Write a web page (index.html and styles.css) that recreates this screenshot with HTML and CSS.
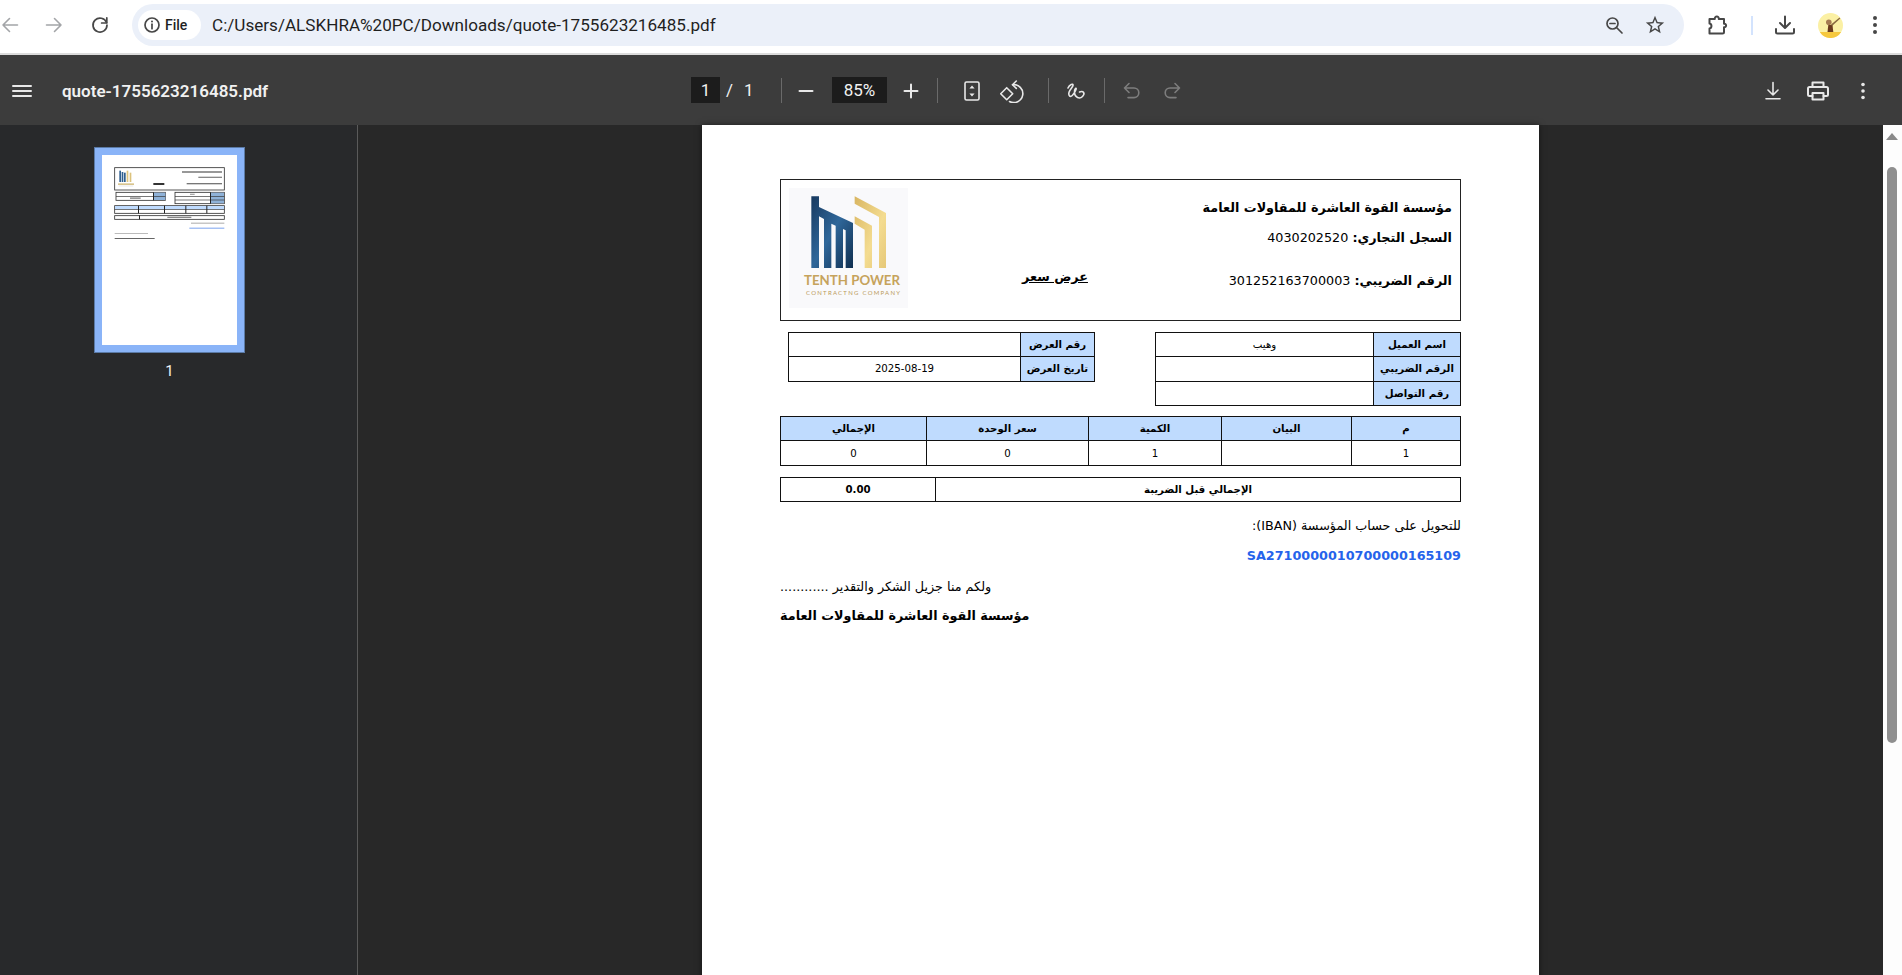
FILE: index.html
```html
<!DOCTYPE html>
<html lang="en">
<head>
  <meta charset="UTF-8" />
  <meta name="viewport" content="width=device-width, initial-scale=1.0"/>
  <title>quote-1755623216485.pdf</title>
  <link rel="stylesheet" href="styles.css">
</head>
<body>
  <!-- Chrome bar -->
  <header class="browser-bar">
    <span class="nav-btn nav-back">
      <svg width="20" height="20" viewBox="0 0 20 20"><path class="line-off" d="M17.500 10H3M9.500 3.500 3 10l6.500 6.500"/></svg>
    </span>
    <span class="nav-btn nav-forward">
      <svg width="20" height="20" viewBox="0 0 20 20"><path class="line-off" d="M2.500 10H17M10.500 3.500 17 10l-6.500 6.500"/></svg>
    </span>
    <span class="nav-btn nav-reload">
      <svg width="20" height="20" viewBox="0 0 20 20"><path class="line-on" d="M16.500 7.500A7 7 0 1 0 17 10"/><path class="line-on" d="M16.800 2.800v5.200h-5.200"/></svg>
    </span>
    <div class="address">
      <div class="site-chip">
        <svg width="18" height="18" viewBox="0 0 18 18"><circle class="line-on" cx="9" cy="9" r="7"/><path class="line-on" d="M9 8.200v4.500"/><circle class="dot-on" cx="9" cy="5.600" r="1"/></svg>
        <span>File</span>
      </div>
      <span class="url">C:/Users/ALSKHRA%20PC/Downloads/quote-1755623216485.pdf</span>
      <div class="address-icons">
        <svg width="20" height="20" viewBox="0 0 20 20"><circle class="line-on" cx="8.500" cy="8.500" r="5.500"/><path class="line-on" d="M6 8.500h5M12.500 12.500l5.500 5.500"/></svg>
        <svg width="22" height="22" viewBox="0 0 24 24"><path class="fill-on" d="M22 9.240l-7.190-.62L12 2 9.190 8.630 2 9.240l5.460 4.730L5.820 21 12 17.270 18.180 21l-1.630-7.030L22 9.240zM12 15.400l-3.760 2.270 1-4.280-3.320-2.880 4.380-.38L12 6.100l1.710 4.040 4.380.38-3.320 2.880 1 4.280L12 15.400z"/></svg>
      </div>
    </div>
    <div class="browser-actions">
      <span class="act act-ext">
        <svg width="22" height="22" viewBox="0 0 22 22"><path class="line-on thick" d="M2.500 5h5.300c-.4-3.300 4.400-3.300 4 0h5.200v4.800c2.800-.3 2.800 3.700 0 3.400v4.800a1.500 1.500 0 0 1-1.500 1.500H2.500v-5c2.600-.4 2.600-4.600 0-5z"/></svg>
      </span>
      <span class="act-sep"></span>
      <span class="act act-down">
        <svg width="22" height="22" viewBox="0 0 22 22"><path class="line-on thick" d="M11 2.500v11M6 9l5 5 5-5M2 15v3a1.500 1.500 0 0 0 1.500 1.500h15A1.500 1.500 0 0 0 20 18v-3"/></svg>
      </span>
      <span class="avatar">
        <svg width="25" height="25" viewBox="0 0 25 25">
          <circle cx="12.500" cy="12.500" r="12.500" fill="#fbf0a4"/>
          <path d="M1.800 19h21.400a12.500 12.500 0 0 1-21.400 0z" fill="#f6c83e"/>
          <path d="M9.500 19l.8-7h4.200l.8 7z" fill="#6b3a1e"/>
          <circle cx="10.800" cy="9.300" r="2.800" fill="#a67c52"/>
          <path d="M13 11.500L21.500 4.500l.8.900L14 13z" fill="#8a6a40"/>
        </svg>
      </span>
      <span class="act act-more">
        <svg width="6" height="20" viewBox="0 0 6 20"><circle class="dot-on" cx="3" cy="3" r="2"/><circle class="dot-on" cx="3" cy="10" r="2"/><circle class="dot-on" cx="3" cy="17" r="2"/></svg>
      </span>
    </div>
  </header>

  <!-- PDF viewer toolbar -->
  <div class="pdf-toolbar">
    <div class="tb-left">
      <svg class="menu-icon" width="20" height="14" viewBox="0 0 20 14"><path class="line-pdf" d="M1 2h18M1 7h18M1 12h18"/></svg>
      <span class="doc-name">quote-1755623216485.pdf</span>
    </div>
    <div class="tb-center">
      <span class="num-box page-box">1</span>
      <span class="page-count"><span>/</span><span>1</span></span>
      <span class="tb-sep"></span>
      <span class="tb-btn btn-minus"><svg width="16" height="16" viewBox="0 0 16 16"><path class="line-pdf" d="M1.500 8h13"/></svg></span>
      <span class="num-box zoom-box">85%</span>
      <span class="tb-btn btn-plus"><svg width="16" height="16" viewBox="0 0 16 16"><path class="line-pdf" d="M1.500 8h13M8 1.500v13"/></svg></span>
      <span class="tb-sep sep-zoom"></span>
      <span class="tb-btn btn-fit">
        <svg width="18" height="22" viewBox="0 0 18 22"><rect class="line-thin" x="2" y="2" width="14" height="18" rx="1.500"/><path class="dot-pdf" d="M9 5.500l2.600 3H6.400zM9 16.500l-2.600-3h5.200z"/></svg>
      </span>
      <span class="tb-btn btn-rotate">
        <svg width="24" height="24" viewBox="0 0 24 24"><path class="line-thin" d="M6.700 8.700l6 6-6 6-6-6z"/><path class="line-thin" d="M12.500 5.700A9 9 0 1 1 9.500 22.500"/><path class="line-thin" d="M16.300 2l-3.800 3.700 3.800 3.700"/></svg>
      </span>
      <span class="tb-sep sep-view"></span>
      <span class="tb-btn btn-draw">
        <svg width="22" height="22" viewBox="0 0 22 22"><path class="line-thin" d="M3 8C4.500 4.500 8.500 3 8 5.500S2.500 11 4 15s5.500-1.500 7-5.500c1-2.500-2-1-1.500 3.500s5 6.500 8 3.500 1-6-3-4.500"/></svg>
      </span>
      <span class="tb-sep sep-draw"></span>
      <span class="tb-btn btn-undo">
        <svg width="20" height="20" viewBox="0 0 20 20"><path class="line-dim" d="M7 2.500L2.500 7 7 11.500M2.500 7H12a4.800 4.800 0 0 1 0 9.600H6"/></svg>
      </span>
      <span class="tb-btn btn-redo">
        <svg width="20" height="20" viewBox="0 0 20 20"><path class="line-dim" d="M13 2.500L17.500 7 13 11.500M17.500 7H8a4.800 4.800 0 0 0 0 9.600h6"/></svg>
      </span>
    </div>
    <div class="tb-right">
      <span class="tb-btn"><svg width="18" height="20" viewBox="0 0 18 20"><path class="line-thin" d="M9 1.500v12.500M4 9l5 5 5-5M2 17.800h14"/></svg></span>
      <span class="tb-btn"><svg width="24" height="22" viewBox="0 0 24 22"><path class="line-pdf" d="M6.500 7V2.500h11V7M6.500 16H3.500A1.500 1.500 0 0 1 2 14.500v-6A1.500 1.500 0 0 1 3.500 7h17A1.500 1.500 0 0 1 22 8.500v6a1.500 1.500 0 0 1-1.500 1.500h-3"/><rect class="line-pdf" x="6.500" y="13" width="11" height="6.500"/></svg></span>
      <span class="tb-btn"><svg width="6" height="18" viewBox="0 0 6 18"><circle class="dot-pdf" cx="3" cy="2.500" r="1.800"/><circle class="dot-pdf" cx="3" cy="9" r="1.800"/><circle class="dot-pdf" cx="3" cy="15.500" r="1.800"/></svg></span>
    </div>
  </div>

  <div class="viewer">
    <!-- Thumbnails -->
    <aside class="sidebar">
      <div class="thumb">
        <svg class="thumb-page" width="135" height="190" viewBox="66 45 405 570">
          <rect x="66" y="45" width="405" height="570" fill="#fff"/>
          <rect class="t-box" x="104" y="83" width="329" height="67"/>
          <rect x="118" y="92" width="5" height="34" fill="#2f5f8f"/>
          <rect x="125" y="96" width="5" height="30" fill="#2f5f8f"/>
          <rect x="132" y="98" width="5" height="28" fill="#2f5f8f"/>
          <rect x="140" y="92" width="5" height="34" fill="#dcc27c"/>
          <rect x="149" y="98" width="5" height="28" fill="#dcc27c"/>
          <rect x="114" y="130" width="48" height="5" fill="#d9c58f"/>
          <rect x="116" y="137" width="44" height="2" fill="#ddd"/>
          <rect x="306" y="94" width="120" height="4" fill="#666"/>
          <rect x="355" y="110" width="71" height="4" fill="#888"/>
          <rect x="320" y="129" width="106" height="4" fill="#777"/>
          <rect x="220" y="129" width="33" height="6" fill="#333"/>
          <rect class="t-box" x="108" y="157" width="148" height="24"/>
          <rect x="221" y="158" width="35" height="22" fill="#8fb2d8"/>
          <rect x="108" y="168" width="148" height="2" fill="#333"/>
          <rect x="219" y="157" width="3" height="24" fill="#222"/>
          <rect x="150" y="172" width="32" height="5" fill="#999"/>
          <rect class="t-box" x="285" y="157" width="148" height="34"/>
          <rect x="392" y="158" width="40" height="32" fill="#8fb2d8"/>
          <rect x="285" y="168" width="148" height="2" fill="#333"/>
          <rect x="285" y="179" width="148" height="2" fill="#333"/>
          <rect x="390" y="157" width="3" height="34" fill="#222"/>
          <rect x="330" y="161" width="14" height="4" fill="#aaa"/>
          <rect class="t-box" x="104" y="197" width="329" height="23"/>
          <rect x="105" y="198" width="327" height="10" fill="#bfdbfe"/>
          <rect x="104" y="207" width="329" height="2" fill="#333"/>
          <rect x="174" y="197" width="3" height="23" fill="#222"/>
          <rect x="252" y="197" width="3" height="23" fill="#222"/>
          <rect x="316" y="197" width="3" height="23" fill="#222"/>
          <rect x="379" y="197" width="3" height="23" fill="#222"/>
          <rect class="t-box" x="104" y="227" width="329" height="11"/>
          <rect x="177" y="226" width="3" height="12" fill="#222"/>
          <rect x="262" y="230" width="72" height="4" fill="#888"/>
          <rect x="333" y="248" width="100" height="3" fill="#aaa"/>
          <rect x="328" y="263" width="105" height="3" fill="#7ba3ef"/>
          <rect x="104" y="279" width="100" height="3" fill="#bbb"/>
          <rect x="104" y="294" width="120" height="3" fill="#666"/>
        </svg>
      </div>
      <div class="thumb-label">1</div>
    </aside>

    <!-- Page -->
    <main class="canvas">
      <div class="page" dir="rtl" lang="ar">
        <section class="head-box">
          <div class="head-info">
            <p class="head-line name"><b>مؤسسة القوة العاشرة للمقاولات العامة</b></p>
            <p class="head-line reg"><b>السجل التجاري:</b> 4030202520</p>
            <p class="head-line tax"><b>الرقم الضريبي:</b> 301252163700003</p>
          </div>
          <h1 class="doc-title">عرض سعر</h1>
          <svg class="logo" width="119" height="120" viewBox="25 25 357 360" direction="ltr">
            <defs>
              <linearGradient id="blue" x1="0" y1="0" x2="1" y2="1">
                <stop offset="0" stop-color="#17395f"/>
                <stop offset="0.5" stop-color="#2f679a"/>
                <stop offset="1" stop-color="#102f50"/>
              </linearGradient>
              <linearGradient id="gold" x1="0" y1="0" x2="1" y2="1">
                <stop offset="0" stop-color="#d9b662"/>
                <stop offset="0.6" stop-color="#f4dc90"/>
                <stop offset="1" stop-color="#e6c878"/>
              </linearGradient>
            </defs>
            <rect x="25" y="25" width="357" height="360" fill="#f9f9fb"/>
            <path fill="url(#blue)" d="M92 50h23v32l102 48v135h-22V152l-8-4v117h-22V138l-13-6v133h-22V118l-15-8v155H92z"/>
            <path fill="url(#gold)" d="M222 50v22l73 40v153h21V100zM222 110v22l30 18v115h22V138z"/>
            <text class="logo-big" x="70" y="315" textLength="288" lengthAdjust="spacingAndGlyphs">TENTH POWER</text>
            <text class="logo-small" x="76" y="347" textLength="282">CONTRACTNG COMPANY</text>
          </svg>
        </section>

        <section class="meta-row">
          <table class="grid client-table">
            <tr><th class="client-label">اسم العميل</th><td>وهيب</td></tr>
            <tr><th class="client-label">الرقم الضريبي</th><td></td></tr>
            <tr><th class="client-label">رقم التواصل</th><td></td></tr>
          </table>
          <table class="grid quote-table">
            <tr><th class="quote-label">رقم العرض</th><td></td></tr>
            <tr><th class="quote-label">تاريخ العرض</th><td>2025-08-19</td></tr>
          </table>
        </section>

        <table class="grid items">
          <tr>
            <th class="col-no">م</th>
            <th class="col-desc">البيان</th>
            <th class="col-qty">الكمية</th>
            <th class="col-price">سعر الوحدة</th>
            <th>الإجمالي</th>
          </tr>
          <tr><td>1</td><td></td><td>1</td><td>0</td><td>0</td></tr>
        </table>

        <table class="grid totals">
          <tr><td class="total-label">الإجمالي قبل الضريبة</td><td class="total-value">0.00</td></tr>
        </table>

        <p class="note iban-label">للتحويل على حساب المؤسسة (IBAN):</p>
        <p class="note iban" dir="ltr">SA2710000010700000165109</p>
        <p class="note thanks">ولكم منا جزيل الشكر والتقدير ............</p>
        <p class="note sign">مؤسسة القوة العاشرة للمقاولات العامة</p>
      </div>
    </main>

    <div class="scrollbar">
      <span class="scroll-up"></span>
      <span class="scroll-thumb"></span>
    </div>
  </div>
</body>
</html>
```

FILE: styles.css
```css
* {
  box-sizing: border-box;
}

html, body {
  height: 100%;
}

body {
  margin: 0;
  overflow: hidden;
  display: flex;
  flex-direction: column;
  font-family: 'Roboto', sans-serif;
  background-color: #282828;
}

svg {
  display: block;
  flex: none;
}

/* shared icon strokes */
.line-on, .line-off, .line-pdf, .line-thin, .line-dim {
  fill: none;
  stroke-linecap: round;
  stroke-linejoin: round;
}

.line-on { stroke: #474747; stroke-width: 1.7; }
.line-on.thick { stroke-width: 2; }
.line-off { stroke: #a3a5a8; stroke-width: 1.6; }
.line-pdf { stroke: #e8e8e8; stroke-width: 2; }
.line-thin { stroke: #e8e8e8; stroke-width: 1.6; }
.line-dim { stroke: #7d7d7d; stroke-width: 1.6; }
.dot-on, .fill-on { fill: #474747; }
.dot-pdf { fill: #e8e8e8; }

/* browser bar */
.browser-bar {
  flex: none;
  height: 55px;
  padding: 4px 0 7px;
  display: flex;
  align-items: center;
  background-color: #fff;
  border-bottom: 2px solid #dcdcdc;
}

.nav-btn {
  flex: none;
  width: 20px;
}

.nav-forward { margin-left: 24px; }
.nav-reload { margin-left: 26px; }

.address {
  flex: none;
  width: 1552px;
  height: 42px;
  margin-left: 22px;
  padding: 0 18px 0 6px;
  display: flex;
  align-items: center;
  background-color: #ebf0f9;
  border-radius: 21px;
}

.site-chip {
  flex: none;
  width: 63px;
  height: 30px;
  padding-left: 5px;
  display: flex;
  align-items: center;
  gap: 4px;
  background-color: #fff;
  border-radius: 15px;
  font-size: 14px;
  font-weight: 500;
  color: #1f1f1f;
}

.url {
  margin-left: 11px;
  font-size: 17.1px;
  color: #1f1f1f;
}

.address-icons {
  margin-left: auto;
  display: flex;
  align-items: center;
  gap: 20px;
}

.browser-actions {
  flex: 1;
  display: flex;
  align-items: center;
}

.act {
  flex: none;
  display: flex;
}

.act-ext { margin-left: 23px; }

.act-sep {
  flex: none;
  width: 2px;
  height: 19px;
  margin-left: 22px;
  background-color: #d3e3fd;
}

.act-down { margin-left: 21px; }

.avatar {
  flex: none;
  margin-left: 22px;
}

.act-more { margin-left: 29px; }

/* pdf toolbar */
.pdf-toolbar {
  flex: none;
  height: 70px;
  display: flex;
  align-items: center;
  background-color: #3c3c3c;
  color: #f1f1f1;
}

.tb-left {
  flex: none;
  width: 691px;
  padding: 2px 0 0 12px;
  display: flex;
  align-items: center;
}

.doc-name {
  margin-left: 30px;
  font-size: 17px;
  font-weight: 600;
  white-space: nowrap;
}

.tb-center, .tb-right {
  display: flex;
  align-items: center;
}

.tb-right {
  margin-left: auto;
  padding-right: 23px;
  gap: 13px;
}

.num-box {
  flex: none;
  height: 26px;
  display: flex;
  align-items: center;
  justify-content: center;
  background-color: #1c1c1c;
  font-size: 17px;
}

.page-box { width: 29px; }

.page-count {
  width: 61px;
  padding-left: 6px;
  display: flex;
  gap: 11px;
  font-size: 17px;
}

.zoom-box {
  width: 55px;
  margin-left: 10px;
}

.tb-sep {
  flex: none;
  width: 1px;
  height: 25px;
  background-color: #6a6a6a;
}

.tb-btn {
  flex: none;
  width: 32px;
  height: 34px;
  padding-top: 2px;
  display: flex;
  align-items: center;
  justify-content: center;
}

.btn-minus { margin-left: 8px; }
.btn-plus { margin-left: 8px; }
.sep-zoom { margin-left: 10px; }
.btn-fit { margin-left: 18px; }
.btn-rotate { margin-left: 8px; }
.sep-view { margin-left: 20px; }
.btn-draw { margin-left: 11px; }
.sep-draw { margin-left: 12px; }
.btn-undo { margin-left: 11px; }
.btn-redo { margin-left: 8px; }

/* viewer */
.viewer {
  flex: 1;
  min-height: 0;
  display: flex;
}

.sidebar {
  flex: none;
  width: 358px;
  padding: 22px 0 0 94px;
  background-color: #28292b;
  border-right: 1px solid #5a5a5a;
}

.thumb {
  width: 151px;
  height: 206px;
  padding: 7px;
  background-color: #8ab4f8;
  border: 1px solid #5b7aa6;
}

.thumb-page {
  width: 135px;
  height: 190px;
  filter: blur(0.3px);
}

.t-box {
  fill: none;
  stroke: #333;
  stroke-width: 2.500;
}

.thumb-label {
  width: 151px;
  margin-top: 9px;
  text-align: center;
  font-size: 15px;
  color: #f1f1f1;
}

.canvas {
  flex: 1;
  min-width: 0;
  display: flex;
  justify-content: center;
  background-color: #282828;
}

.page {
  flex: none;
  width: 837px;
  height: 1184px;
  padding: 54px 78px 0;
  background-color: #fff;
  box-shadow: 0 0 6px rgba(0, 0, 0, 0.5);
  font-family: 'DejaVu Sans', sans-serif;
  font-size: 12.75px;
  color: #000;
}

.head-box {
  height: 142px;
  display: grid;
  grid-template-columns: 320px 170px 1fr;
  border: 1px solid #222;
}

.head-info {
  padding: 19px 8px 0 0;
}

.head-line {
  margin: 0;
  line-height: 18px;
}

.reg { margin-top: 12px; }
.tax { margin-top: 25px; }

.doc-title {
  align-self: end;
  margin: 0 0 34px;
  text-align: center;
  font-size: 12.75px;
  font-weight: 700;
  line-height: 18px;
  text-decoration: underline;
}

.logo {
  justify-self: end;
  margin: 8px 0 0 8px;
}

.logo-big {
  font-family: 'Lato', sans-serif;
  font-size: 42px;
  font-weight: 700;
  fill: #c6a35c;
}

.logo-small {
  font-family: 'Lato', sans-serif;
  font-size: 18px;
  fill: #b99a5c;
}

.grid {
  border-collapse: collapse;
  table-layout: fixed;
  font-size: 10.2px;
}

.grid th, .grid td {
  padding: 0;
  border: 1px solid #111;
  text-align: center;
  font-weight: 400;
}

.grid th {
  background-color: #bfdbfe;
  font-weight: 700;
}

.meta-row {
  margin-top: 11px;
  padding-left: 8px;
  display: flex;
  justify-content: space-between;
  align-items: flex-start;
}

.client-table {
  width: 306px;
}

.quote-table {
  width: 307px;
}

.client-table tr, .quote-table tr {
  height: 24.3px;
}

.client-label {
  width: 87px;
}

.quote-label {
  width: 74px;
}

.items {
  width: 100%;
  margin-top: 10px;
}

.items tr {
  height: 24.5px;
}

.col-no { width: 109px; }
.col-desc { width: 130px; }
.col-qty { width: 133px; }
.col-price { width: 162px; }

.totals {
  width: 100%;
  margin-top: 11px;
}

.totals tr {
  height: 24.5px;
}

.grid .total-label,
.grid .total-value {
  font-weight: 700;
}

.total-value {
  width: 155px;
}

.note {
  margin: 0;
  line-height: 18px;
}

.iban-label {
  margin-top: 15px;
}

.iban {
  margin-top: 12px;
  text-align: right;
  font-weight: 700;
  color: #2563eb;
}

.thanks {
  margin-top: 13px;
  text-align: left;
}

.sign {
  margin-top: 11px;
  text-align: left;
  font-weight: 700;
}

/* page scrollbar */
.scrollbar {
  flex: none;
  width: 19px;
  padding: 0 5px 0 4px;
  display: flex;
  flex-direction: column;
  align-items: center;
  background-color: #fdfdfd;
}

.scroll-up {
  flex: none;
  margin-top: 8px;
  border-left: 6.5px solid transparent;
  border-right: 6.5px solid transparent;
  border-bottom: 7px solid #8a8a8a;
}

.scroll-thumb {
  flex: none;
  width: 10px;
  height: 576px;
  margin-top: 27px;
  background-color: #8f8f8f;
  border-radius: 5px;
}
```
